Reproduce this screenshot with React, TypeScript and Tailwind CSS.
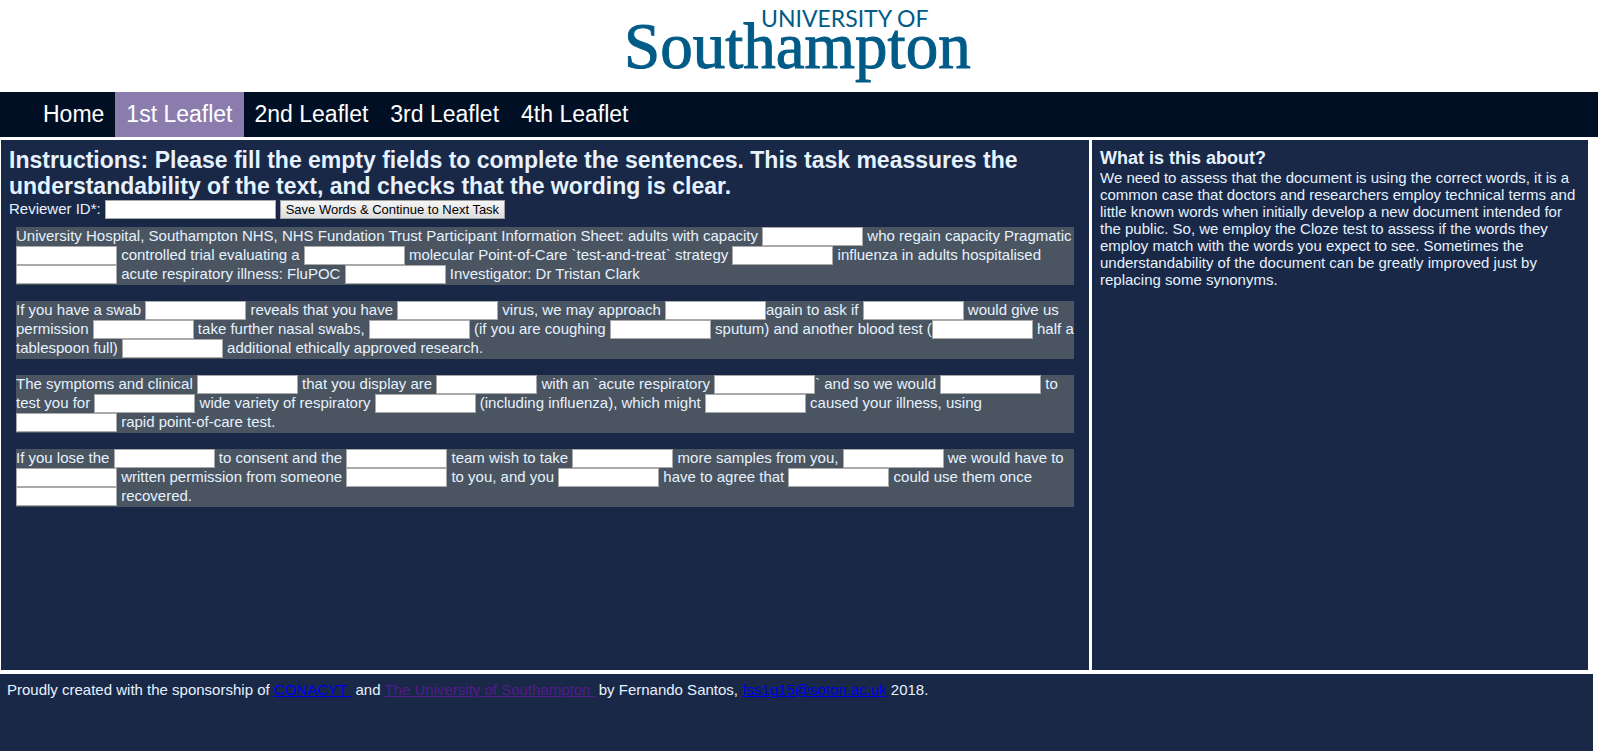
import React, { Fragment } from "react";

const NAV_ITEMS = ["Home", "1st Leaflet", "2nd Leaflet", "3rd Leaflet", "4th Leaflet"];
const ACTIVE_ITEM = "1st Leaflet";

// Each "___" marks a word the reviewer has to supply.
const PARAGRAPHS = [
  "University Hospital, Southampton NHS, NHS Fundation Trust Participant Information Sheet: adults with capacity ___ who regain capacity Pragmatic ___ controlled trial evaluating a ___ molecular Point-of-Care `test-and-treat` strategy ___ influenza in adults hospitalised ___ acute respiratory illness: FluPOC ___ Investigator: Dr Tristan Clark",
  "If you have a swab ___ reveals that you have ___ virus, we may approach ___again to ask if ___ would give us permission ___ take further nasal swabs, ___ (if you are coughing ___ sputum) and another blood test (___ half a tablespoon full) ___ additional ethically approved research.",
  "The symptoms and clinical ___ that you display are ___ with an `acute respiratory ___` and so we would ___ to test you for ___ wide variety of respiratory ___ (including influenza), which might ___ caused your illness, using ___ rapid point-of-care test.",
  "If you lose the ___ to consent and the ___ team wish to take ___ more samples from you, ___ we would have to ___ written permission from someone ___ to you, and you ___ have to agree that ___ could use them once ___ recovered.",
];

function Logo() {
  return (
    <svg
      role="img"
      aria-label="University of Southampton"
      viewBox="0 0 360 92"
      className="h-[92px] w-[360px]"
      fill="#005b87"
    >
      <text x="142" y="27" fontFamily="Lato, sans-serif" fontSize="23">
        UNIVERSITY OF
      </text>
      <text
        x="5"
        y="68"
        fontFamily="'Liberation Serif', serif"
        fontSize="65"
        stroke="#005b87"
        strokeWidth="1"
      >
        Southampton
      </text>
    </svg>
  );
}

function ClozeParagraph({ text, number }: { text: string; number: number }) {
  const parts = text.split("___");
  return (
    <p className="bg-[#4a5561] pb-px">
      {parts.map((part, i) => (
        <Fragment key={i}>
          {i > 0 && (
            <input
              type="text"
              aria-label={`Paragraph ${number}, missing word ${i}`}
              className="h-[19px] w-[101px] border border-[#a9a9a9] bg-white px-px align-top text-[13px] text-black"
            />
          )}
          {part}
        </Fragment>
      ))}
    </p>
  );
}

export default function App() {
  return (
    <div className="flex min-h-screen flex-col bg-white font-['Liberation_Sans',Arial,sans-serif] text-[15px] leading-[17px] text-[#e6f2ff]">
      <header className="flex justify-center">
        <Logo />
      </header>

      <nav className="bg-[#000f24] pl-8">
        <ul className="flex">
          {NAV_ITEMS.map((item) => (
            <li key={item}>
              <a
                href="#"
                aria-current={item === ACTIVE_ITEM ? "page" : undefined}
                className={
                  item === ACTIVE_ITEM
                    ? "block bg-[#8b7cae] px-[11px] pt-[9px] pb-[10px] text-[23px] leading-[26px] text-white"
                    : "block px-[11px] pt-[9px] pb-[10px] text-[23px] leading-[26px] text-white"
                }
              >
                {item}
              </a>
            </li>
          ))}
        </ul>
      </nav>

      <div className="mt-[3px] mr-[10px] ml-px grid min-h-[530px] grid-cols-[68fr_31fr] gap-[3px]">
        <main className="bg-[#192847] px-2 pt-[7px]">
          <h1 className="pb-px text-[23px] leading-[26px] font-bold">
            Instructions: Please fill the empty fields to complete the sentences. This task meassures the
            understandability of the text, and checks that the wording is clear.
          </h1>
          <form onSubmit={(e) => e.preventDefault()}>
            <div className="flex items-start gap-1">
              <label htmlFor="reviewer">Reviewer ID*:</label>
              <input
                id="reviewer"
                type="text"
                className="h-[19px] w-[171px] border border-[#a9a9a9] bg-white px-px text-[13px] text-black"
              />
              <button
                type="submit"
                className="h-[19px] border border-[#a0a0a0] bg-linear-to-b from-[#f5f5f5] to-[#dddddd] px-[5px] text-[13px] leading-[17px] text-black"
              >
                Save Words &amp; Continue to Next Task
              </button>
            </div>
            <div className="mt-2 flex flex-col gap-4 px-[7px]">
              {PARAGRAPHS.map((text, i) => (
                <ClozeParagraph key={i} text={text} number={i + 1} />
              ))}
            </div>
          </form>
        </main>

        <aside className="bg-[#192847] px-2 pt-2">
          <h2 className="pb-px text-[18px] leading-5 font-bold">What is this about?</h2>
          <p>
            We need to assess that the document is using the correct words, it is a common case that doctors and
            researchers employ technical terms and little known words when initially develop a new document intended
            for the public. So, we employ the Cloze test to assess if the words they employ match with the words you
            expect to see. Sometimes the understandability of the document can be greatly improved just by replacing
            some synonyms.
          </p>
        </aside>
      </div>

      <footer className="mt-1 mr-[5px] grow bg-[#192847] px-[7px] pt-[7px]">
        Proudly created with the sponsorship of{" "}
        <a href="#" className="text-[#0000ee] underline">
          CONACYT&nbsp;
        </a>{" "}
        and{" "}
        <a href="#" className="text-[#551a8b] underline">
          The University of Southampton&nbsp;
        </a>{" "}
        by Fernando Santos,{" "}
        <a href="#" className="text-[#0000ee] underline">
          fss1g15@soton.ac.uk
        </a>{" "}
        2018.
      </footer>
    </div>
  );
}
